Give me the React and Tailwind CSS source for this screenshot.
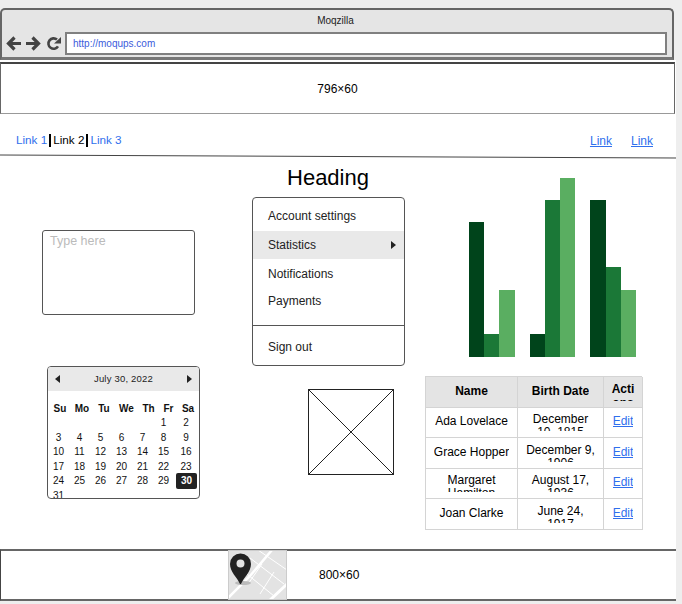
import React from "react";

function Arrow({ flip }) {
  return (
    <svg width="15" height="15" viewBox="0 0 15 15" className={flip ? "-scale-x-100" : ""}>
      <path d="M15 7.5H3M8.5 1.5L2.5 7.5L8.5 13.5" fill="none" stroke="#444" strokeWidth="3.2" />
    </svg>
  );
}

function Reload() {
  return (
    <svg width="15" height="15" viewBox="0 0 15 15">
      <path d="M12 10.4A5.2 5.2 0 1 1 11 3.6" fill="none" stroke="#444" strokeWidth="2.6" />
      <path d="M8 7.5H15V1Z" fill="#444" />
    </svg>
  );
}

function Browser() {
  return (
    <div className="mt-2 w-[674px] h-[52px] bg-[#e5e5e5] border-2 border-b-[3px] border-[#666] border-b-[#777] border-l-[#666] rounded-t-[5px] box-border">
      <div className="h-[20px] pt-[3px] pr-[3px] text-center text-[10px] leading-[15px] text-[#222]">Moqzilla</div>
      <div className="flex items-center h-[23px] mt-[2px] pl-[4px] pr-[5px]">
        <Arrow />
        <span className="w-[5px]" />
        <Arrow flip />
        <span className="w-[5px]" />
        <Reload />
        <div className="ml-[4px] flex-1 h-[23px] bg-white border-2 border-[#808080] box-border flex items-center pl-[6px] text-[10px] text-[#3b5bdb]">
          http://moqups.com
        </div>
      </div>
    </div>
  );
}

function TopAd() {
  return (
    <div className="mt-[2px] w-[675px] h-[52px] border-t-2 border-x border-b border-t-[#444] border-x-[#666] border-b-[#999] flex items-center justify-center text-[12px] text-black box-border">
      796×60
    </div>
  );
}

function Nav() {
  return (
    <div className="h-[40px] flex items-start justify-between pl-[16px] pr-[23px] pt-[18px] text-[11.7px] leading-[16px]">
      <div className="flex">
        <a className="text-[#2f6fed]">Link 1</a>
        <span className="w-[2px] h-[13px] mt-[2px] mx-[2px] bg-black" />
        <span className="text-black">Link 2</span>
        <span className="w-[2px] h-[13px] mt-[2px] mx-[2px] bg-black" />
        <a className="text-[#2f6fed]">Link 3</a>
      </div>
      <div className="flex gap-[19px] pt-[1px] text-[12px]">
        <a className="text-[#2f6fed] underline">Link</a>
        <a className="text-[#2f6fed] underline">Link</a>
      </div>
    </div>
  );
}

function Menu() {
  return (
    <div className="w-[153px] h-[169px] mt-[6px] bg-white border border-[#555] rounded-[4px] text-[12px] text-[#222] box-border overflow-hidden">
      <div className="h-[33px] pl-[15px] pt-[3px] flex items-center">Account settings</div>
      <div className="h-[28px] pl-[15px] pr-[8px] flex items-center justify-between bg-[#e9e9e9]">
        Statistics
        <span className="w-0 h-0 border-y-[4px] border-y-transparent border-l-[5px] border-l-[#222]" />
      </div>
      <div className="h-[29px] pl-[15px] flex items-center">Notifications</div>
      <div className="h-[26px] pl-[15px] flex items-center">Payments</div>
      <div className="mt-[11px] border-t border-[#555] h-[40px] pl-[15px] pt-[2px] flex items-center">Sign out</div>
    </div>
  );
}

function Chart() {
  const bars = [
    [469, 15, 135, "#00441b"], [484, 15, 23, "#1b7837"], [499, 16, 67, "#5aae61"],
    [530, 15, 23, "#00441b"], [545, 15, 157, "#1b7837"], [560, 15, 179, "#5aae61"],
    [590, 16, 157, "#00441b"], [606, 15, 90, "#1b7837"], [621, 15, 67, "#5aae61"],
  ];
  return (
    <svg width="251" height="179" className="block mt-[19px]">
      {bars.map(([x, w, h, c], i) => (
        <rect key={i} x={x - 425} y={179 - h} width={w} height={h} fill={c} />
      ))}
    </svg>
  );
}

function Placeholder() {
  return (
    <svg width="86" height="86" className="block mt-[23px] ml-[56px]">
      <rect x="0.5" y="0.5" width="85" height="85" fill="white" stroke="#222" />
      <path d="M0 0L86 86M86 0L0 86" stroke="#222" strokeWidth="1" />
    </svg>
  );
}

function Calendar() {
  const heads = [["Su", 22], ["Mo", 22], ["Tu", 22], ["We", 23], ["Th", 21], ["Fr", 19], ["Sa", 20]];
  const days = [];
  for (let i = 0; i < 5; i++) days.push("");
  for (let i = 1; i <= 31; i++) days.push(i);
  return (
    <div className="ml-[47px] mt-[51px] w-[153px] h-[133px] border border-[#555] rounded-[4px] overflow-hidden box-border bg-white">
      <div className="h-[24px] bg-[#e9e9e9] flex items-center justify-between px-[7px] text-[9.5px] text-[#222]">
        <span className="w-0 h-0 border-y-[4px] border-y-transparent border-r-[5px] border-r-[#222]" />
        <span className="tracking-[0.2px]">July 30, 2022</span>
        <span className="w-0 h-0 border-y-[4px] border-y-transparent border-l-[5px] border-l-[#222]" />
      </div>
      <div className="flex pl-[1px] mt-[10px] h-[14px] items-center text-[10px] font-bold text-[#111]">
        {heads.map(([h, w]) => (
          <span key={h} className="text-center" style={{ width: w }}>{h}</span>
        ))}
      </div>
      <div className="grid grid-cols-[21px_21px_21px_21px_21px_21px_24px] text-[10px] text-[#111] auto-rows-[14.5px] mt-[0.5px]">
        {days.map((d, i) => (
          <span key={i} className={d === 30 ? "flex items-center justify-center bg-[#222] text-white font-bold rounded-[2px] w-[21px] h-[16px] ml-[2px] -mt-[1px]" : "flex items-center justify-center"}>{d}</span>
        ))}
      </div>
    </div>
  );
}

function Cell({ children, bold, link, two, narrow }) {
  return (
    <div className={"border-r border-b border-[#d4d4d4] flex justify-center items-center " + (bold ? "bg-[#e4e4e4] font-bold" : "bg-white")}>
      <div className={"h-[18px] overflow-hidden text-center leading-[13px] " + (two ? "" : "pt-[2px] ") + (narrow ? "w-[70px] " : "") + (link ? "text-[#2f6fed] underline" : "")}>
        {children}
      </div>
    </div>
  );
}

function DataTable() {
  const rows = [
    ["Ada Lovelace", "December 10, 1815"],
    ["Grace Hopper", "December 9, 1906"],
    ["Margaret Hamilton", "August 17, 1936"],
    ["Joan Clarke", "June 24, 1917"],
  ];
  return (
    <div className="mt-[19px] w-[217px] grid grid-cols-[92px_86px_39px] auto-rows-[30.5px] border-t border-l border-[#d4d4d4] text-[12px] text-black box-border">
      <Cell bold>Name</Cell>
      <Cell bold>Birth Date</Cell>
      <div className="border-r border-b border-[#d4d4d4] bg-[#e4e4e4] font-bold flex justify-center pt-[5px]">
        <div className="h-[19px] w-[26px] overflow-hidden break-all text-center leading-[14px]">Actions</div>
      </div>
      {rows.map(([n, d]) => (
        <React.Fragment key={n}>
          <Cell two={n.startsWith("Margaret")} narrow={n.startsWith("Margaret")}>{n}</Cell>
          <Cell two narrow>{d}</Cell>
          <Cell link>Edit</Cell>
        </React.Fragment>
      ))}
    </div>
  );
}

function MapThumb() {
  return (
    <svg width="59" height="50" viewBox="0 0 59 50" className="block">
      <rect width="59" height="50" fill="#e3e3e3" />
      <g stroke="#fff" fill="none">
        <path d="M0 48L22 26L44 0" strokeWidth="2.5" />
        <path d="M22 8L56 34M30 0L59 20M14 20L46 46M34 14L20 34M46 22L32 44" strokeWidth="1" />
        <path d="M42 50L59 34" strokeWidth="3" />
      </g>
      <ellipse cx="15" cy="33" rx="8" ry="2" fill="#bbb" />
      <path fillRule="evenodd" d="M12 34C9 27 2 22 2 14A10.5 10.5 0 0 1 23 14C23 22 16 27 13 34ZM12.5 9.5A4 4 0 1 0 12.5 17.5A4 4 0 1 0 12.5 9.5Z" fill="#222" />
      <rect x="0.5" y="0.5" width="58" height="49" fill="none" stroke="#ccc" />
    </svg>
  );
}

function BottomAd() {
  return (
    <div className="h-[52px] w-[676px] border-y-2 border-t-[#666] border-b-[#666] border-l border-l-[#444] flex items-center box-border">
      <div className="ml-[227px]"><MapThumb /></div>
      <div className="ml-[32px] text-[12px] text-black">800×60</div>
    </div>
  );
}

export default function App() {
  return (
    <div className="w-[682px] h-[604px] overflow-hidden bg-[#eeeeee] font-['Liberation_Sans',Arial,sans-serif]">
      <div className="h-[601px] w-[676px] flex flex-col">
        <div className="h-[60px] bg-[#eeeeee]"><Browser /></div>
        <div className="flex-1 bg-white flex flex-col">
          <TopAd />
          <Nav />
          <svg width="676" height="5" className="block shrink-0">
            <line x1="0" y1="1" x2="676" y2="4" stroke="#444" strokeWidth="1" />
          </svg>
          <div className="flex-1 grid grid-cols-[252px_173px_251px]">
            <div>
              <div className="ml-[42px] mt-[71px] w-[153px] h-[85px] border border-[#555] rounded-[3px] px-[7px] pt-[3px] text-[12.5px] leading-[14px] text-[#bbbbbb] box-border">
                Type here
              </div>
              <Calendar />
            </div>
            <div>
              <div className="w-[152px] text-center text-[22px] leading-[26px] mt-[6px] text-black">Heading</div>
              <Menu />
              <Placeholder />
            </div>
            <div>
              <Chart />
              <DataTable />
            </div>
          </div>
          <BottomAd />
        </div>
      </div>
    </div>
  );
}
